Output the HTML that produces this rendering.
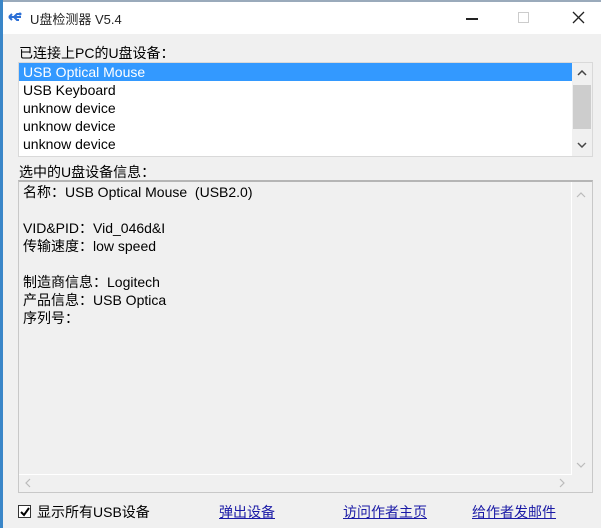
<!DOCTYPE html>
<html><head><meta charset="utf-8"><style>
*{margin:0;padding:0;box-sizing:border-box}
body{width:601px;height:528px;overflow:hidden;background:#f0f0f0;position:relative;font-family:"Liberation Sans","Noto Sans CJK SC",sans-serif;font-size:14px;color:#000}
.a{position:absolute;white-space:nowrap}
#title{left:0;top:0;width:601px;height:34px;background:#fff;border-top:2px solid #9aaabb}
#lb{left:0;top:0;width:3px;height:528px;background:#3a86c8}
.list{left:18px;top:62px;width:575px;height:95px;background:#fff;border:1px solid #d9d9d9;overflow:hidden}
.row{position:absolute;left:0;height:18px;line-height:18px;padding-left:4px;width:553px}
.info{left:18px;top:180px;width:575px;height:313px;border:1px solid #c8c8c8;border-top:2px solid #b5b5b5}
.t{position:absolute;left:4px;line-height:18px}
a{color:#1a1aa6;text-decoration:underline}
</style></head><body>
<div class="a" id="title"></div>
<div class="a" id="lb"></div>
<svg class="a" style="left:8px;top:12px" width="14" height="10"><path d="M1 5H13M1 5L4 2M1 5L4 8M6 5L9 2H11M6 5L9 8H11" stroke="#2b6fd6" stroke-width="2" fill="none"/><circle cx="12" cy="2" r="1.5" fill="#2b6fd6"/></svg>
<div class="a" style="left:30px;top:9px;font-size:13px;color:#222">U盘检测器 V5.4</div>
<div class="a" style="left:466px;top:18px;width:12px;height:1.5px;background:#222"></div>
<div class="a" style="left:518px;top:12px;width:11px;height:11px;border:1px solid #ccc"></div>
<svg class="a" style="left:572px;top:11px" width="13" height="13"><path d="M1 1L12 12M12 1L1 12" stroke="#222" stroke-width="1.3"/></svg>
<div class="a" style="left:19px;top:43px">已连接上PC的U盘设备：</div>
<div class="a list">
<div class="row" style="top:0;background:#3399ff;color:#fff">USB Optical Mouse</div>
<div class="row" style="top:18px">USB Keyboard</div>
<div class="row" style="top:36px">unknow device</div>
<div class="row" style="top:54px">unknow device</div>
<div class="row" style="top:72px">unknow device</div>
<div class="row" style="top:90px">unknow device</div>
<div style="position:absolute;left:553px;top:0;width:20px;height:93px;background:#f0f0f0"></div>
<div style="position:absolute;left:554px;top:22px;width:18px;height:44px;background:#cdcdcd"></div>
<svg style="position:absolute;left:558px;top:7px" width="10" height="6"><path d="M1 5L5 1L9 5" stroke="#444" stroke-width="1.5" fill="none"/></svg>
<svg style="position:absolute;left:558px;top:79px" width="10" height="6"><path d="M1 1L5 5L9 1" stroke="#444" stroke-width="1.5" fill="none"/></svg>
</div>
<div class="a" style="left:19px;top:162px">选中的U盘设备信息：</div>
<div class="a info">
<div class="t" style="top:1px">名称：USB Optical Mouse &nbsp;(USB2.0)</div>
<div class="t" style="top:37px">VID&amp;PID：Vid_046d&amp;I</div>
<div class="t" style="top:55px">传输速度：low speed</div>
<div class="t" style="top:91px">制造商信息：Logitech</div>
<div class="t" style="top:109px">产品信息：USB Optica</div>
<div class="t" style="top:127px">序列号：</div>
<svg style="position:absolute;left:557px;top:10px" width="10" height="6"><path d="M1 5L5 1L9 5" stroke="#bbb" stroke-width="1.2" fill="none"/></svg>
<svg style="position:absolute;left:557px;top:280px" width="10" height="6"><path d="M1 1L5 5L9 1" stroke="#bbb" stroke-width="1.2" fill="none"/></svg>
<div style="position:absolute;left:0;top:292px;width:552px;height:1px;background:#fff"></div>
<div style="position:absolute;left:552px;top:0;width:1px;height:293px;background:#fff"></div>
<svg style="position:absolute;left:6px;top:296px" width="6" height="10"><path d="M5 1L1 5L5 9" stroke="#bbb" stroke-width="1.2" fill="none"/></svg>
<svg style="position:absolute;left:540px;top:296px" width="6" height="10"><path d="M1 1L5 5L1 9" stroke="#bbb" stroke-width="1.2" fill="none"/></svg>
</div>
<div class="a" style="left:18px;top:505px;width:13px;height:13px;border:1px solid #333;background:#fff"></div>
<svg class="a" style="left:20px;top:507px" width="10" height="10"><path d="M1 5L4 8L9 1" stroke="#000" stroke-width="2" fill="none"/></svg>
<div class="a" style="left:37px;top:502px">显示所有USB设备</div>
<a class="a" style="left:219px;top:502px">弹出设备</a>
<a class="a" style="left:343px;top:502px">访问作者主页</a>
<a class="a" style="left:472px;top:502px">给作者发邮件</a>
</body></html>
